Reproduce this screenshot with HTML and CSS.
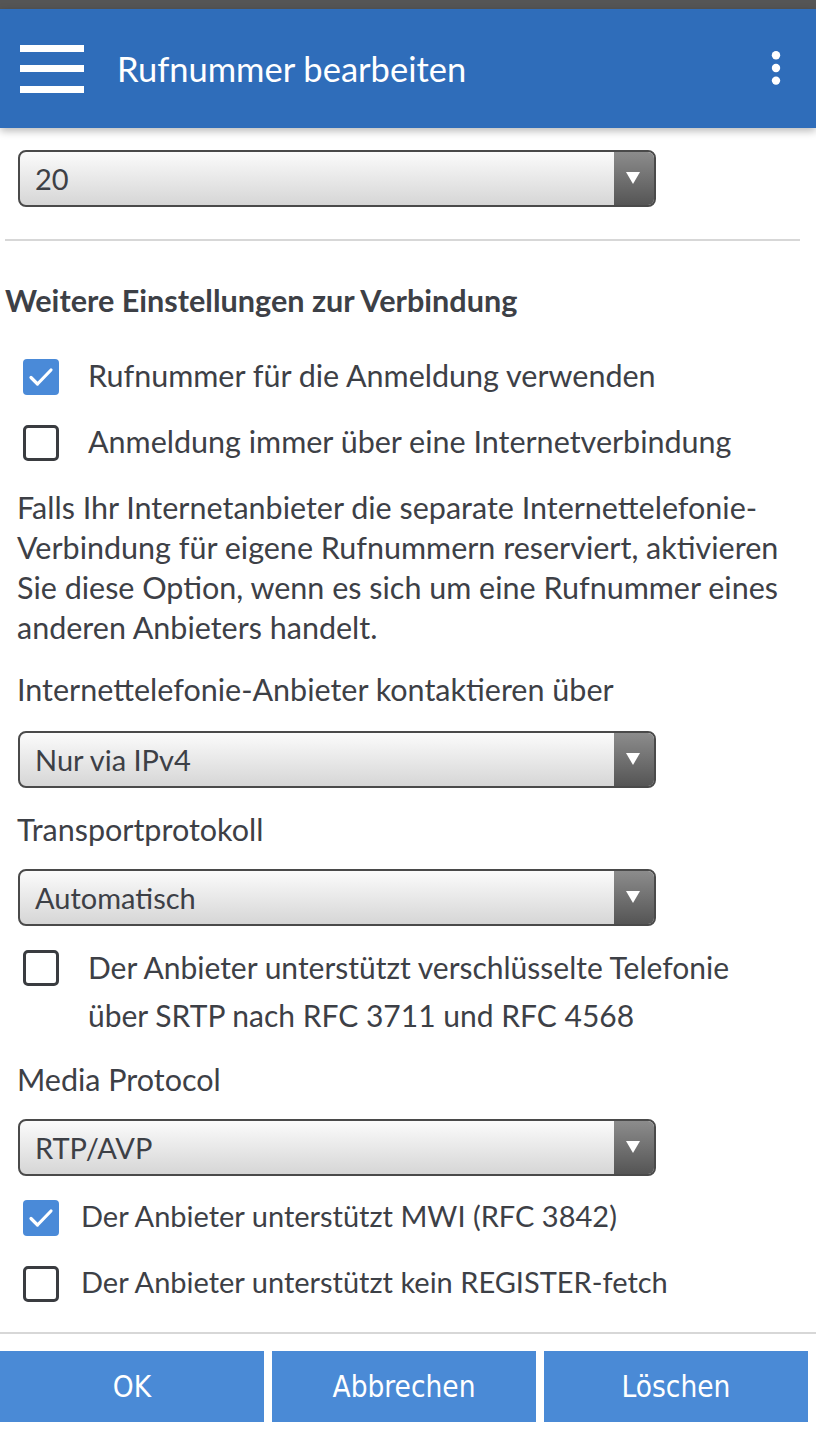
FILE: index.html
```html
<!DOCTYPE html>
<html lang="de">
<head>
<meta charset="utf-8">
<title>Rufnummer bearbeiten</title>
<link rel="stylesheet" href="styles.css">
</head>
<body>
<div class="statusbar"></div>
<header class="appbar">
  <svg class="hamburger" width="64" height="48" viewBox="0 0 64 48" aria-hidden="true">
    <rect x="0" y="0" width="64" height="7" fill="#fff"/>
    <rect x="0" y="20" width="64" height="7" fill="#fff"/>
    <rect x="0" y="41" width="64" height="7" fill="#fff"/>
  </svg>
  <h1 class="title">Rufnummer bearbeiten</h1>
  <svg class="kebab" width="10" height="34" viewBox="0 0 10 34" aria-hidden="true">
    <circle cx="5" cy="4.2" r="4.2" fill="#fff"/>
    <circle cx="5" cy="17" r="4.2" fill="#fff"/>
    <circle cx="5" cy="29.6" r="4.2" fill="#fff"/>
  </svg>
</header>

<main class="content">
  <div class="select select-first"><span class="select-value">20</span><span class="select-arrow"></span></div>
  <hr class="divider">
  <h2 class="section-title">Weitere Einstellungen zur Verbindung</h2>

  <div class="check-row row-1">
    <span class="checkbox checked"><svg width="36" height="36" viewBox="0 0 36 36"><path d="M8 18.5 L14.5 25 L28 11" fill="none" stroke="#fff" stroke-width="3.2" stroke-linecap="round" stroke-linejoin="round"/></svg></span>
    <span class="check-label">Rufnummer für die Anmeldung verwenden</span>
  </div>
  <div class="check-row row-2">
    <span class="checkbox"></span>
    <span class="check-label">Anmeldung immer über eine Internetverbindung</span>
  </div>

  <p class="hint">Falls Ihr Internetanbieter die separate Internettelefonie-Verbindung für eigene Rufnummern reserviert, aktivieren Sie diese Option, wenn es sich um eine Rufnummer eines anderen Anbieters handelt.</p>

  <p class="field-label label-contact">Internettelefonie-Anbieter kontaktieren über</p>
  <div class="select select-contact"><span class="select-value">Nur via IPv4</span><span class="select-arrow"></span></div>

  <p class="field-label label-transport">Transportprotokoll</p>
  <div class="select select-transport"><span class="select-value">Automatisch</span><span class="select-arrow"></span></div>

  <div class="check-row row-srtp">
    <span class="checkbox"></span>
    <span class="check-label two-line">Der Anbieter unterstützt verschlüsselte Telefonie über SRTP nach RFC 3711 und RFC 4568</span>
  </div>

  <p class="field-label label-media">Media Protocol</p>
  <div class="select select-media"><span class="select-value">RTP/AVP</span><span class="select-arrow"></span></div>

  <div class="check-row row-mwi narrow">
    <span class="checkbox checked"><svg width="36" height="36" viewBox="0 0 36 36"><path d="M8 18.5 L14.5 25 L28 11" fill="none" stroke="#fff" stroke-width="3.2" stroke-linecap="round" stroke-linejoin="round"/></svg></span>
    <span class="check-label">Der Anbieter unterstützt MWI (RFC 3842)</span>
  </div>
  <div class="check-row row-reg narrow">
    <span class="checkbox"></span>
    <span class="check-label">Der Anbieter unterstützt kein REGISTER-fetch</span>
  </div>
</main>

<hr class="footer-divider">
<footer class="buttons">
  <button class="btn">OK</button>
  <button class="btn">Abbrechen</button>
  <button class="btn">Löschen</button>
</footer>
</body>
</html>
```
FILE: styles.css
```css
* { box-sizing: border-box; }

html, body {
  margin: 0;
  padding: 0;
  background: #fff;
}

body {
  position: relative;
  width: 816px;
  height: 1437px;
  overflow: hidden;
  font-family: "Lato", "Open Sans", sans-serif;
  color: #3d4046;
}

.statusbar {
  height: 9px;
  background: #555555;
}

.appbar {
  position: relative;
  z-index: 2;
  height: 119px;
  background: #2f6dba;
  box-shadow: 0 3px 8px rgba(0, 0, 0, 0.28);
  display: flex;
  align-items: center;
  padding-left: 20px;
  padding-right: 35px;
}

.hamburger { flex: none; }

.title {
  margin: 0 0 0 33px;
  flex: 1;
  font-weight: 400;
  font-size: 34.5px;
  line-height: 40px;
  color: #fff;
}

.kebab { flex: none; margin-bottom: 2px; }

.content {
  padding: 22px 16px 0 5px;
}

.select {
  margin-left: 13px;
  width: 638px;
  height: 57px;
  border: 2px solid #4a4a4a;
  border-radius: 8px;
  background: linear-gradient(#fbfbfb, #d6d6d6);
  display: flex;
  align-items: center;
  overflow: hidden;
}

.select-value {
  flex: 1;
  padding-left: 15px;
  font-size: 29px;
  line-height: 36px;
  color: #3d4046;
}

.select-arrow {
  flex: none;
  width: 40px;
  height: 100%;
  background: linear-gradient(#8c8c8c, #555555);
  position: relative;
}

.select-arrow::after {
  content: "";
  position: absolute;
  left: 12px;
  top: 20px;
  border-left: 7px solid transparent;
  border-right: 7px solid transparent;
  border-top: 12px solid #fff;
}

.divider {
  margin: 32px 0 0 0;
  border: 0;
  border-top: 2px solid #d7d7d7;
  width: 795px;
}

.section-title {
  margin: 44px 0 0 0;
  font-size: 30.6px;
  font-weight: 700;
  line-height: 32px;
  color: #3d4046;
}

.check-row {
  display: flex;
  align-items: flex-start;
  padding-left: 18px;
}

.checkbox {
  flex: none;
  width: 36px;
  height: 36px;
  border: 3px solid #3a3c40;
  border-radius: 5px;
  background: #fff;
}

.checkbox.checked {
  border: 0;
  background: #4a8ad8;
  border-radius: 4px;
}

.checkbox svg { display: block; }

.check-label {
  margin-left: 29px;
  font-size: 30.5px;
  line-height: 36px;
  margin-top: -2px;
  white-space: nowrap;
}

.narrow .check-label {
  margin-left: 22px;
  font-size: 29px;
}

.two-line {
  white-space: normal;
  font-size: 30px;
  line-height: 48px;
  margin-top: -7px;
  padding-right: 40px;
}

.row-1 { margin-top: 42px; }
.row-2 { margin-top: 30px; }

.hint {
  margin: 26px 0 0 12px;
  font-size: 30.5px;
  line-height: 40px;
  padding-right: 8px;
}

.field-label {
  margin: 0 0 0 12px;
  font-size: 30.5px;
  line-height: 40px;
}

.label-contact { margin-top: 22px; margin-bottom: 22px; }
.label-transport { margin-top: 21px; margin-bottom: 20px; }
.label-media { margin-top: 20px; margin-bottom: 20px; }

.row-srtp { margin-top: 24px; }
.row-mwi { margin-top: 24px; }
.row-reg { margin-top: 30px; }

.footer-divider {
  margin: 0;
  position: absolute;
  left: 0;
  top: 1332px;
  width: 816px;
  border: 0;
  border-top: 2px solid #d7d7d7;
}

.buttons {
  position: absolute;
  left: 0;
  top: 1351px;
  width: 808px;
  display: flex;
  gap: 8px;
}

.btn {
  flex: 1;
  height: 71px;
  border: 0;
  margin: 0;
  background: #4a8ad6;
  color: #fff;
  font-family: "DejaVu Sans Condensed", "Liberation Sans Narrow", sans-serif;
  font-size: 29.5px;
  padding: 0;
}
```
